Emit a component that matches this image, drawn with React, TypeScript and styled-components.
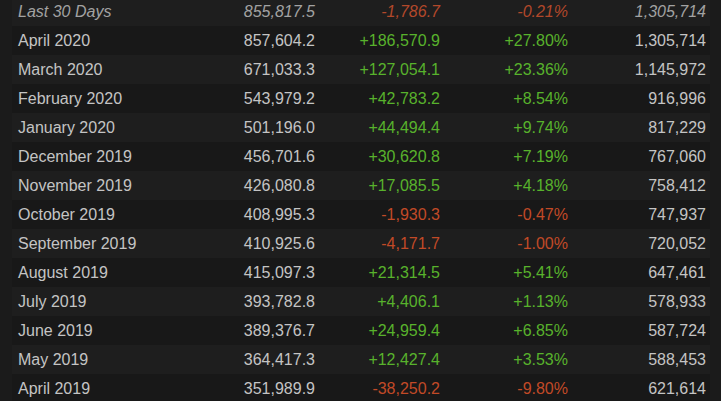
import React from "react";
import styled, { createGlobalStyle, css } from "styled-components";

const Global = createGlobalStyle`
  html, body {
    margin: 0;
    padding: 0;
    background: #1b1b1b;
    overflow: hidden;
  }
  body {
    font-family: "Liberation Sans", Arial, Helvetica, sans-serif;
  }
`;

const Page = styled.div`
  width: 721px;
  height: 401px;
  overflow: hidden;
  background: #1b1b1b;
`;

const Table = styled.div`
  margin: -3px 11px 0 12px;
  display: flex;
  flex-direction: column;
`;

const Row = styled.div<{ $alt: boolean; $summary?: boolean }>`
  display: grid;
  grid-template-columns: 197px 100px 125px 128px 138px;
  height: 29px;
  align-items: center;
  padding: 0 4px 0 6px;
  background: ${(p) => (p.$alt ? "#1e1e1e" : "#181818")};
  font-size: 16px;
  color: #c4c4c4;
  ${(p) =>
    p.$summary &&
    css`
      font-style: italic;
      color: #a2a2a2;
    `}
`;

const Cell = styled.div<{ $tone?: "up" | "down" | "plain"; $left?: boolean; $dim?: boolean }>`
  text-align: ${(p) => (p.$left ? "left" : "right")};
  white-space: nowrap;
  color: ${(p) =>
    p.$tone === "up"
      ? "#58b22c"
      : p.$tone === "down"
      ? p.$dim
        ? "#b2482a"
        : "#c24a27"
      : "inherit"};
`;

type R = [string, string, string, string, string];

const rows: R[] = [
  ["Last 30 Days", "855,817.5", "-1,786.7", "-0.21%", "1,305,714"],
  ["April 2020", "857,604.2", "+186,570.9", "+27.80%", "1,305,714"],
  ["March 2020", "671,033.3", "+127,054.1", "+23.36%", "1,145,972"],
  ["February 2020", "543,979.2", "+42,783.2", "+8.54%", "916,996"],
  ["January 2020", "501,196.0", "+44,494.4", "+9.74%", "817,229"],
  ["December 2019", "456,701.6", "+30,620.8", "+7.19%", "767,060"],
  ["November 2019", "426,080.8", "+17,085.5", "+4.18%", "758,412"],
  ["October 2019", "408,995.3", "-1,930.3", "-0.47%", "747,937"],
  ["September 2019", "410,925.6", "-4,171.7", "-1.00%", "720,052"],
  ["August 2019", "415,097.3", "+21,314.5", "+5.41%", "647,461"],
  ["July 2019", "393,782.8", "+4,406.1", "+1.13%", "578,933"],
  ["June 2019", "389,376.7", "+24,959.4", "+6.85%", "587,724"],
  ["May 2019", "364,417.3", "+12,427.4", "+3.53%", "588,453"],
  ["April 2019", "351,989.9", "-38,250.2", "-9.80%", "621,614"],
];

export default function App() {
  return (
    <Page>
      <Global />
      <Table>
        {rows.map((r, i) => {
          const tone = r[2].startsWith("-") ? "down" : "up";
          return (
            <Row key={r[0]} $alt={i % 2 === 0} $summary={i === 0}>
              <Cell $left>{r[0]}</Cell>
              <Cell>{r[1]}</Cell>
              <Cell $tone={tone} $dim={i === 0}>{r[2]}</Cell>
              <Cell $tone={tone} $dim={i === 0}>{r[3]}</Cell>
              <Cell>{r[4]}</Cell>
            </Row>
          );
        })}
      </Table>
    </Page>
  );
}
